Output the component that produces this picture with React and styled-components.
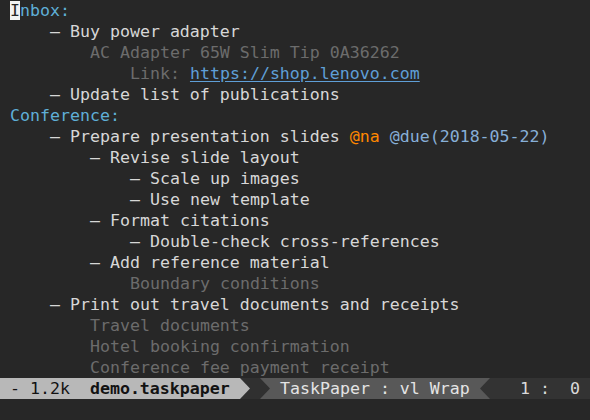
import React from "react";
import styled, { createGlobalStyle } from "styled-components";

const GlobalStyle = createGlobalStyle`
  html, body {
    margin: 0;
    padding: 0;
    background: #272727;
  }
  body {
    font-family: "DejaVu Sans Mono", "Liberation Mono", monospace;
    font-size: 16.6px;
  }
`;

const Screen = styled.div`
  width: 590px;
  height: 420px;
  background: #272727;
  display: flex;
  flex-direction: column;
  overflow: hidden;
`;

const Buffer = styled.div`
  display: flex;
  flex-direction: column;
`;

const colors = {
  project: "#5fafd7",
  task: "#d7d7d7",
  note: "#6c6c6c",
};

const Line = styled.div`
  height: 21px;
  line-height: 21px;
  white-space: pre;
  padding-left: ${(p) => 10 + (p.$indent || 0) * 10}px;
  color: ${(p) => colors[p.$kind] || colors.task};
`;

const Cursor = styled.span`
  background: #f2f2f2;
  color: #262626;
`;

const Tag = styled.span`
  color: ${(p) => (p.$hot ? "#ff8700" : "#87afd7")};
`;

const Link = styled.span`
  color: #5f9fd7;
  text-decoration: underline;
  text-underline-offset: 2px;
`;

const StatusBar = styled.div`
  display: flex;
  height: 21px;
  line-height: 21px;
  white-space: pre;
`;

const Segment = styled.div`
  background: ${(p) => p.$bg};
  color: ${(p) => p.$fg || "#d7d7d7"};
  width: ${(p) => p.$w}px;
  flex: none;
  overflow: hidden;
`;

const Strong = styled.span`
  font-weight: bold;
`;

const Arrow = styled.div`
  width: 10px;
  flex: none;
  background: ${(p) => p.$bg};
  position: relative;
  &::after {
    content: "";
    position: absolute;
    inset: 0;
    background: ${(p) => p.$fg};
    clip-path: ${(p) =>
      p.$left
        ? "polygon(100% 0, 100% 100%, 0 50%)"
        : "polygon(0 0, 100% 50%, 0 100%)"};
  }
`;

const lines = [
  { k: "project", i: 0, t: "cursor" },
  { k: "task", i: 4, t: "– Buy power adapter" },
  { k: "note", i: 8, t: "AC Adapter 65W Slim Tip 0A36262" },
  { k: "note", i: 12, t: "link" },
  { k: "task", i: 4, t: "– Update list of publications" },
  { k: "project", i: 0, t: "Conference:" },
  { k: "task", i: 4, t: "tags" },
  { k: "task", i: 8, t: "– Revise slide layout" },
  { k: "task", i: 12, t: "– Scale up images" },
  { k: "task", i: 12, t: "– Use new template" },
  { k: "task", i: 8, t: "– Format citations" },
  { k: "task", i: 12, t: "– Double-check cross-references" },
  { k: "task", i: 8, t: "– Add reference material" },
  { k: "note", i: 12, t: "Boundary conditions" },
  { k: "task", i: 4, t: "– Print out travel documents and receipts" },
  { k: "note", i: 8, t: "Travel documents" },
  { k: "note", i: 8, t: "Hotel booking confirmation" },
  { k: "note", i: 8, t: "Conference fee payment receipt" },
];

function renderText(t) {
  if (t === "cursor")
    return (
      <>
        <Cursor>I</Cursor>nbox:
      </>
    );
  if (t === "link")
    return (
      <>
        Link: <Link>https://shop.lenovo.com</Link>
      </>
    );
  if (t === "tags")
    return (
      <>
        – Prepare presentation slides <Tag $hot>@na</Tag>{" "}
        <Tag>@due(2018-05-22)</Tag>
      </>
    );
  return t;
}

export default function App() {
  return (
    <>
      <GlobalStyle />
      <Screen>
        <Buffer>
          {lines.map((l, n) => (
            <Line key={n} $kind={l.k} $indent={l.i}>
              {renderText(l.t)}
            </Line>
          ))}
        </Buffer>
        <StatusBar>
          <Segment $bg="#b8b8b8" $fg="#121212" $w={240}>
            {" - 1.2k  "}
            <Strong>demo.taskpaper</Strong>
            {" "}
          </Segment>
          <Arrow $bg="#303030" $fg="#b8b8b8" />
          <Segment $bg="#303030" $w={10} />
          <Arrow $bg="#585858" $fg="#303030" />
          <Segment $bg="#585858" $fg="#e4e4e4" $w={210}>
            {" TaskPaper : vl Wrap "}
          </Segment>
          <Arrow $bg="#585858" $fg="#333333" $left />
          <Segment $bg="#333333" $fg="#dadada" $w={100}>
            {"   1 :  0 "}
          </Segment>
        </StatusBar>
      </Screen>
    </>
  );
}
